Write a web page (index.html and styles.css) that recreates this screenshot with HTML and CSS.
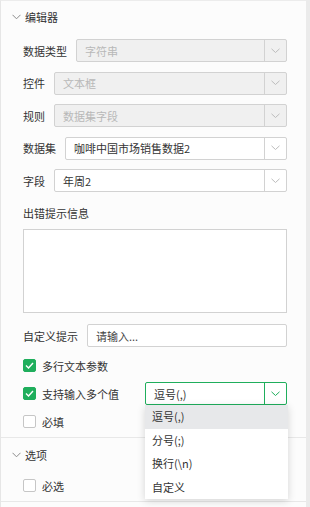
FILE: index.html
```html
<!DOCTYPE html>
<html lang="zh-CN">
<head>
  <meta charset="UTF-8">
  <meta name="viewport" content="width=device-width, initial-scale=1.0">
  <title>编辑器</title>
  <link rel="stylesheet" href="styles.css">
</head>
<body>
  <div class="frame">
    <div class="panel">
      <!-- 编辑器 -->
      <div class="section">
        <div class="section-head">
          <svg class="caret" width="9" height="6" viewBox="0 0 9 6"><polyline points="0.5,0.8 4.5,4.8 8.5,0.8" fill="none" stroke="currentColor" stroke-width="1"/></svg>
          <span>编辑器</span>
        </div>
        <div class="section-body">
          <div class="fields">
            <div class="field">
              <span class="field-label">数据类型</span>
              <div class="select is-disabled">
                <span class="select-value">字符串</span>
                <span class="select-arrow"><svg width="9" height="6" viewBox="0 0 9 6"><polyline points="0.5,0.8 4.5,4.5 8.5,0.8" fill="none" stroke="currentColor" stroke-width="1"/></svg></span>
              </div>
            </div>
            <div class="field">
              <span class="field-label">控件</span>
              <div class="select is-disabled">
                <span class="select-value">文本框</span>
                <span class="select-arrow"><svg width="9" height="6" viewBox="0 0 9 6"><polyline points="0.5,0.8 4.5,4.5 8.5,0.8" fill="none" stroke="currentColor" stroke-width="1"/></svg></span>
              </div>
            </div>
            <div class="field">
              <span class="field-label">规则</span>
              <div class="select is-disabled">
                <span class="select-value">数据集字段</span>
                <span class="select-arrow"><svg width="9" height="6" viewBox="0 0 9 6"><polyline points="0.5,0.8 4.5,4.5 8.5,0.8" fill="none" stroke="currentColor" stroke-width="1"/></svg></span>
              </div>
            </div>
            <div class="field">
              <span class="field-label">数据集</span>
              <div class="select">
                <span class="select-value">咖啡中国市场销售数据2</span>
                <span class="select-arrow"><svg width="9" height="6" viewBox="0 0 9 6"><polyline points="0.5,0.8 4.5,4.5 8.5,0.8" fill="none" stroke="currentColor" stroke-width="1"/></svg></span>
              </div>
            </div>
            <div class="field">
              <span class="field-label">字段</span>
              <div class="select">
                <span class="select-value">年周2</span>
                <span class="select-arrow"><svg width="9" height="6" viewBox="0 0 9 6"><polyline points="0.5,0.8 4.5,4.5 8.5,0.8" fill="none" stroke="currentColor" stroke-width="1"/></svg></span>
              </div>
            </div>
          </div>

          <div class="block-label">出错提示信息</div>
          <div class="textarea"></div>

          <div class="field field-prompt">
            <span class="field-label">自定义提示</span>
            <div class="input">请输入...</div>
          </div>

          <div class="checks">
            <div class="check-row">
              <span class="checkbox is-checked"><svg width="9" height="7" viewBox="0 0 9 7"><polyline points="1,3.5 3.5,6 8,1" fill="none" stroke="#fff" stroke-width="1.4"/></svg></span>
              <span>多行文本参数</span>
            </div>
            <div class="check-row">
              <span class="checkbox is-checked"><svg width="9" height="7" viewBox="0 0 9 7"><polyline points="1,3.5 3.5,6 8,1" fill="none" stroke="#fff" stroke-width="1.4"/></svg></span>
              <span>支持输入多个值</span>
              <div class="select select-open">
                <span class="select-value">逗号(,)</span>
                <span class="select-arrow"><svg width="9" height="6" viewBox="0 0 9 6"><polyline points="0.5,0.8 4.5,4.5 8.5,0.8" fill="none" stroke="currentColor" stroke-width="1"/></svg></span>
                <ul class="dropdown">
                  <li class="is-active">逗号(,)</li>
                  <li>分号(;)</li>
                  <li>换行(\n)</li>
                  <li>自定义</li>
                </ul>
              </div>
            </div>
            <div class="check-row">
              <span class="checkbox"></span>
              <span>必填</span>
            </div>
          </div>
        </div>
      </div>

      <!-- 选项 -->
      <div class="section section-options">
        <div class="section-head">
          <svg class="caret" width="9" height="6" viewBox="0 0 9 6"><polyline points="0.5,0.8 4.5,4.8 8.5,0.8" fill="none" stroke="currentColor" stroke-width="1"/></svg>
          <span>选项</span>
        </div>
        <div class="section-body">
          <div class="checks">
            <div class="check-row">
              <span class="checkbox"></span>
              <span>必选</span>
            </div>
          </div>
        </div>
      </div>
    </div>
    <div class="scrollbar"></div>
  </div>
</body>
</html>
```

FILE: styles.css
```css
body {
  margin: 0;
  padding: 0;
  width: 310px;
  height: 507px;
  overflow: hidden;
  font-family: "Noto Sans CJK SC", "Noto Sans", sans-serif;
  font-size: 11px;
  color: #333333;
  background: #fcfcfc;
}

.frame {
  display: flex;
  height: 507px;
}

.panel {
  width: 306px;
  box-sizing: border-box;
  border-left: 1px solid #e6e6e6;
  border-top: 1px solid #ececec;
  background: #fcfcfc;
}

.scrollbar {
  width: 4px;
  background: #ebebeb;
}

.section {
  border-bottom: 1px solid #e8e8e8;
}

.section-head {
  height: 32px;
  display: flex;
  align-items: center;
  gap: 4px;
  padding-left: 11px;
}

.caret {
  color: #8c8c8c;
}

.section-body {
  padding: 6px 19px 4px 22px;
}

.section-options .section-head {
  height: 34px;
}

.section-options .section-body {
  padding-top: 2px;
}

.fields {
  display: flex;
  flex-direction: column;
  gap: 9.5px;
}

.field {
  display: flex;
  align-items: center;
  gap: 9px;
}

.field-label {
  white-space: nowrap;
  line-height: 16px;
}

.select {
  position: relative;
  flex: 1;
  height: 23px;
  box-sizing: border-box;
  border: 1px solid #d2d2d2;
  border-radius: 2px;
  background: #ffffff;
  display: flex;
  align-items: center;
}

.select-value {
  flex: 1;
  padding-left: 8px;
  white-space: nowrap;
  overflow: hidden;
}

.select-arrow {
  width: 21px;
  height: 100%;
  border-left: 1px solid #d2d2d2;
  display: flex;
  align-items: center;
  justify-content: center;
  color: #bdbdbd;
}

.select.is-disabled {
  background: #f0f0f0;
}

.select.is-disabled .select-value {
  color: #b8b8b8;
}

.select-open {
  flex: none;
  width: 142px;
  margin-left: auto;
  border-color: #1fae5c;
}

.select-open .select-arrow {
  border-left-color: #1fae5c;
  color: #1fae5c;
}

.dropdown {
  position: absolute;
  top: 22px;
  left: -1px;
  width: 143px;
  margin: 0;
  padding: 0;
  list-style: none;
  background: #ffffff;
  box-shadow: 0 2px 8px rgba(0, 0, 0, 0.16);
  z-index: 2;
}

.dropdown li {
  height: 23.5px;
  line-height: 23.5px;
  padding-left: 7px;
}

.dropdown li.is-active {
  background: #e7e8ea;
}

.block-label {
  margin-top: 13px;
  line-height: 16px;
}

.textarea {
  margin-top: 8px;
  height: 84px;
  box-sizing: border-box;
  border: 1px solid #d2d2d2;
  background: #ffffff;
}

.field-prompt {
  margin-top: 11px;
}

.input {
  flex: 1;
  height: 23px;
  box-sizing: border-box;
  border: 1px solid #d2d2d2;
  border-radius: 2px;
  background: #ffffff;
  padding-left: 8px;
  display: flex;
  align-items: center;
  color: #444444;
}

.checks {
  display: flex;
  flex-direction: column;
  gap: 5px;
  margin-top: 7px;
}

.section-options .checks {
  margin-top: 0;
}

.check-row {
  height: 23px;
  display: flex;
  align-items: center;
  gap: 6px;
  white-space: nowrap;
}

.checkbox {
  width: 13px;
  height: 13px;
  box-sizing: border-box;
  border: 1px solid #c6c6c6;
  border-radius: 2px;
  background: #ffffff;
  display: flex;
  align-items: center;
  justify-content: center;
  flex: none;
}

.checkbox.is-checked {
  border-color: #1fae5c;
  background: #1fae5c;
}
```
